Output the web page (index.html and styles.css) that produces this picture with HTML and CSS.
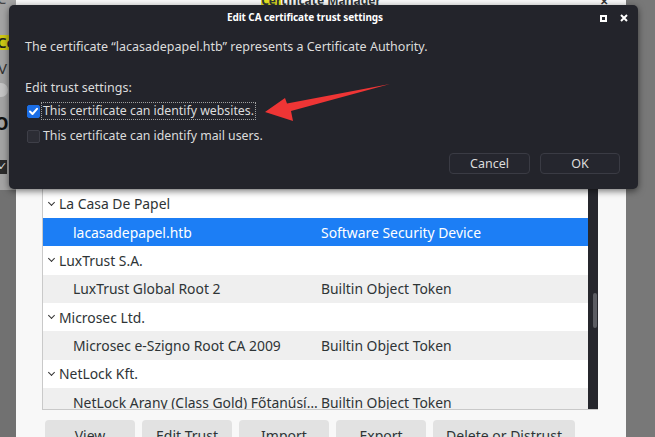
FILE: index.html
```html
<!DOCTYPE html>
<html>
<head>
<meta charset="utf-8">
<link rel="stylesheet" href="styles.css">
</head>
<body>
<div class="desktop">
  <div class="bgwin">
    <div class="bg-top">
      <span class="frag frag-c">C</span>
      <span class="frag frag-hl">Ce</span>
      <span class="frag frag-v">V</span>
      <span class="frag frag-circle"></span>
      <span class="frag frag-o">O</span>
      <span class="frag frag-box">✓</span>
    </div>
  </div>

  <div class="certmgr">
    <div class="cm-titlebar">
      <span class="cm-title"><span class="hl">Cer</span>tificate Manager</span>
      <span class="cm-close">✕</span>
    </div>
    <div class="cm-body">
      <div class="list">
        <div class="rows">
          <div class="row parent"><span class="chev"></span><span class="c1"></span><span class="c2"></span></div>
          <div class="row child alt"><span class="c1"></span><span class="c2"></span></div>
          <div class="row parent"><span class="chev"></span><span class="c1">La Casa De Papel</span><span class="c2"></span></div>
          <div class="row child selected"><span class="c1">lacasadepapel.htb</span><span class="c2">Software Security Device</span></div>
          <div class="row parent"><span class="chev"></span><span class="c1">LuxTrust S.A.</span><span class="c2"></span></div>
          <div class="row child alt"><span class="c1">LuxTrust Global Root 2</span><span class="c2">Builtin Object Token</span></div>
          <div class="row parent"><span class="chev"></span><span class="c1">Microsec Ltd.</span><span class="c2"></span></div>
          <div class="row child alt"><span class="c1">Microsec e-Szigno Root CA 2009</span><span class="c2">Builtin Object Token</span></div>
          <div class="row parent"><span class="chev"></span><span class="c1">NetLock Kft.</span><span class="c2"></span></div>
          <div class="row child alt"><span class="c1">NetLock Arany (Class Gold) Főtanúsí…</span><span class="c2">Builtin Object Token</span></div>
        </div>
        <div class="scrollbar"><div class="thumb"></div></div>
      </div>
      <div class="cm-buttons">
        <span class="lbtn w90">View</span>
        <span class="lbtn w90">Edit Trust</span>
        <span class="lbtn w90">Import</span>
        <span class="lbtn w90">Export</span>
        <span class="lbtn w142">Delete or Distrust</span>
      </div>
    </div>
  </div>

  <div class="dialog">
    <div class="dlg-titlebar">
      <span class="dlg-title">Edit CA certificate trust settings</span>
      <span class="dlg-icons">
        <span class="ico-max"></span>
        <svg class="ico-close" width="8" height="8" viewBox="0 0 8 8"><path d="M1 1 L7 7 M7 1 L1 7" stroke="#fff" stroke-width="2" fill="none"/></svg>
      </span>
    </div>
    <div class="dlg-body">
      <p class="line first">The certificate “lacasadepapel.htb” represents a Certificate Authority.</p>
      <p class="line second">Edit trust settings:</p>
      <div class="check-row">
        <span class="cb checked"><svg width="13" height="13" viewBox="0 0 13 13"><path d="M3 6.5 L5.5 9 L10 3.8" stroke="#fff" stroke-width="2" fill="none" stroke-linecap="round" stroke-linejoin="round"/></svg></span>
        <span class="cb-label focus">This certificate can identify websites.</span>
      </div>
      <div class="check-row">
        <span class="cb"></span>
        <span class="cb-label">This certificate can identify mail users.</span>
      </div>
      <div class="dlg-buttons">
        <span class="dbtn cancel">Cancel</span>
        <span class="dbtn ok">OK</span>
      </div>
    </div>
  </div>

  <svg class="arrow" width="655" height="437" viewBox="0 0 655 437">
    <polygon points="265,112 285,98 287,103.5 390,84 291,111 293,121" fill="#ee3535"/>
  </svg>
</div>
</body>
</html>
```

FILE: styles.css
```css
* { box-sizing: border-box; }
html, body { margin: 0; padding: 0; }
body {
  width: 655px;
  height: 437px;
  overflow: hidden;
  font-family: "Noto Sans", "Open Sans", sans-serif;
  background: #777777;
}
.desktop {
  position: relative;
  width: 655px;
  height: 437px;
  display: flex;
  overflow: hidden;
  background: #787878;
}

/* background window strip on the left */
.bgwin {
  width: 16px;
  flex: none;
  background: #717171;
}
.bg-top {
  position: relative;
  height: 190px;
  background: #a4a4a4;
  overflow: hidden;
}
.frag { position: absolute; font-size: 15px; color: #1c1c1c; line-height: 1; }
.frag-c { left: -3px; top: -9px; color: #444; }
.frag-hl { left: -4px; top: 35px; background: #cfc915; padding: 0 1px; font-weight: 600; color: #222; }
.frag-v { left: -2px; top: 61px; color: #333; }
.frag-circle { left: -6px; top: 83px; width: 14px; height: 14px; border-radius: 50%; background: #c4c4c4; }
.frag-o { left: -5px; top: 115px; font-weight: 700; color: #111; font-size: 17px; }
.frag-box { left: -6px; top: 160px; width: 13px; height: 14px; background: #2b2b2b; color: #ddd; font-size: 11px; text-align: right; }

/* Certificate Manager window */
.certmgr {
  width: 610px;
  flex: none;
  background: #f8f8f8;
  display: flex;
  flex-direction: column;
}
.cm-titlebar {
  height: 16px;
  margin-top: -7px;
  position: relative;
  display: flex;
  justify-content: center;
  font-size: 12px;
  font-weight: 700;
  color: #2e3436;
  line-height: 16px;
}
.cm-title .hl { background: #e6e21f; }
.cm-close {
  position: absolute;
  right: 18px;
  top: 0;
  font-size: 10px;
  color: #333;
}
.cm-body {
  padding: 0 28px 0 26px;
  margin-top: 124px;
}
.list {
  height: 277px;
  display: flex;
  border-left: 1px solid #c9c9c9;
  border-bottom: 1px solid #c9c9c9;
  background: #ffffff;
}
.rows {
  flex: 1;
  overflow: hidden;
  font-size: 13.9px;
  color: #2e3436;
}
.row {
  height: 28.33px;
  display: flex;
  align-items: center;
  white-space: nowrap;
}
.row.alt { background: #efefef; }
.row.selected { background: #1c7ef5; color: #ffffff; }
.row .chev {
  width: 16px;
  flex: none;
  height: 28px;
  display: flex;
  align-items: center;
  justify-content: center;
}
.row .chev::before {
  content: "";
  width: 4px;
  height: 4px;
  border-right: 1.6px solid #333;
  border-bottom: 1.6px solid #333;
  transform: rotate(45deg);
  margin-top: -3px;
}
.row.parent .c1 { width: 262px; }
.row.child .c1 { width: 248px; margin-left: 30px; }
.row .c2 { flex: 1; }
.scrollbar {
  width: 10px;
  flex: none;
  background: #26272d;
  position: relative;
  padding-top: 160px;
  padding-left: 5px;
}
.thumb {
  width: 4px;
  height: 35px;
  border-radius: 2px;
  background: #5c5d63;
}
.cm-buttons {
  display: flex;
  gap: 7px;
  margin-top: 10px;
  padding-left: 3px;
}
.lbtn {
  height: 30px;
  background: #e2e2e2;
  border-radius: 4px;
  font-size: 14px;
  color: #2e3436;
  text-align: center;
  line-height: 30px;
  padding-top: 1px;
}
.w90 { width: 90px; }
.w142 { width: 142px; }

/* Dialog */
.dialog {
  position: absolute;
  left: 9px;
  top: 5px;
  width: 629px;
  height: 184px;
  background: #23242b;
  border-radius: 5px;
  box-shadow: 0 2px 7px rgba(0,0,0,0.55);
  color: #dcdcdc;
}
.dlg-titlebar {
  height: 24px;
  position: relative;
  display: flex;
  align-items: center;
  justify-content: center;
  padding-right: 37px;
}
.dlg-title {
  font-size: 10px;
  font-weight: 700;
  color: #ffffff;
  letter-spacing: -0.1px;
}
.dlg-icons {
  position: absolute;
  right: 10px;
  top: 9px;
  display: flex;
  gap: 13px;
  align-items: center;
}
.ico-max {
  width: 7px;
  height: 7px;
  border: 2px solid #ffffff;
}
.dlg-body {
  padding: 9px 18px 0 16px;
}
.line {
  margin: 0;
  height: 18px;
  line-height: 18px;
  font-size: 12.5px;
}
.line.second { margin-top: 23px; }
.check-row {
  display: flex;
  align-items: center;
  height: 18px;
  margin-top: 7px;
  padding-left: 2px;
  font-size: 12.3px;
}
.line.second + .check-row { margin-top: 5px; }
.cb {
  width: 13px;
  height: 13px;
  border-radius: 2px;
  background: #2c2d35;
  border: 1px solid #3e3f48;
  flex: none;
  display: flex;
}
.cb.checked {
  background: #1b6ee6;
  border-color: #1b6ee6;
}
.cb.checked svg { margin: -1px; }
.cb-label {
  margin-left: 1px;
  padding: 0 1px 0 1px;
  height: 18px;
  line-height: 16px;
  border: 1px dotted transparent;
}
.cb-label.focus { border-color: #a0a0a0; }
.dlg-buttons {
  display: flex;
  justify-content: flex-end;
  gap: 10px;
  margin-top: 8px;
}
.dbtn {
  height: 21px;
  border: 1px solid #3a3b44;
  border-radius: 4px;
  background: #25262e;
  font-size: 12.5px;
  line-height: 19px;
  text-align: center;
  color: #dcdcdc;
}
.dbtn.cancel { width: 81px; }
.dbtn.ok { width: 80px; }

.arrow {
  position: absolute;
  left: 0;
  top: 0;
  pointer-events: none;
}
```
